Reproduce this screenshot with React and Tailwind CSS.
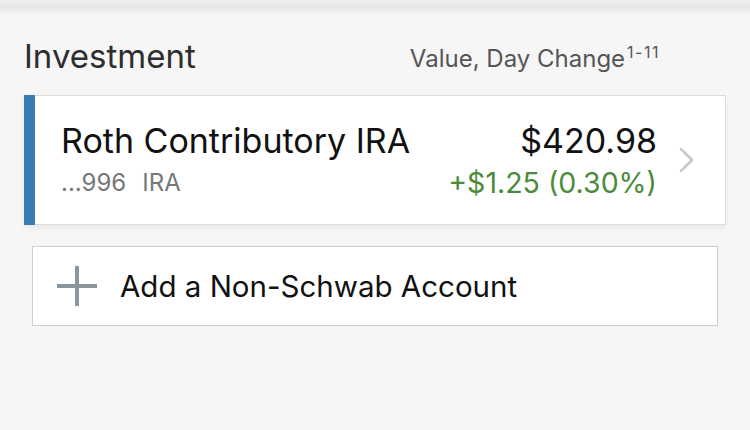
import React from 'react';

function Chevron() {
  return (
    <svg width="16" height="26" viewBox="0 0 16 26" fill="none">
      <path d="M2 2 L13 13 L2 24" stroke="#c9c9c9" strokeWidth="2.5" strokeLinecap="round" strokeLinejoin="round" />
    </svg>
  );
}

function Plus() {
  return (
    <svg width="42" height="42" viewBox="0 0 42 42">
      <path d="M21 1 V41 M1 21 H41" stroke="#8b959e" strokeWidth="4" />
    </svg>
  );
}

export default function App() {
  return (
    <div className="w-[750px] h-[430px] bg-[#f6f6f6] overflow-hidden font-['Inter',sans-serif]">
      {/* shadow of bar above */}
      <div className="h-[14px] bg-gradient-to-b from-[#eeeeee] via-[#e6e6e6] to-[#f6f6f6]" />

      {/* Section header */}
      <div className="flex items-end justify-between pl-[24px] pr-[90px] pt-[22px] pb-[19px]">
        <h2 className="text-[33px] leading-[40px] text-[#2e2e2e]">Investment</h2>
        <span className="text-[24px] leading-[34px] text-[#555555]">
          Value, Day Change<span className="relative -top-[9px] ml-[2px] text-[16px] leading-none tracking-[1.5px]">1-11</span>
        </span>
      </div>

      {/* Account card */}
      <div className="mx-[24px] h-[130px] flex bg-white border border-[#dedede] shadow-[0_3px_5px_rgba(0,0,0,0.06)]">
        <div className="w-[11px] bg-[#3a7db2] -my-px -ml-px" />
        <div className="flex-1 flex items-center pl-[26px] pr-[30px]">
          <div className="flex-1">
            <div className="text-[34px] leading-[40px] text-[#111111]">Roth Contributory IRA</div>
            <div className="text-[24px] leading-[34px] text-[#777777] mt-[5px]">
              ...996<span className="ml-[16px]">IRA</span>
            </div>
          </div>
          <div className="text-right mr-[22px]">
            <div className="text-[34px] leading-[40px] text-[#111111]">$420.98</div>
            <div className="text-[28.5px] leading-[34px] text-[#4b8b3b] mt-[5px]">+$1.25 (0.30%)</div>
          </div>
          <Chevron />
        </div>
      </div>

      {/* Add account */}
      <div className="mx-[32px] mt-[21px] h-[80px] flex items-center gap-[22px] pl-[23px] bg-white border border-[#cfcfcf]">
        <Plus />
        <span className="text-[29.5px] text-[#111111]">Add a Non-Schwab Account</span>
      </div>
    </div>
  );
}
